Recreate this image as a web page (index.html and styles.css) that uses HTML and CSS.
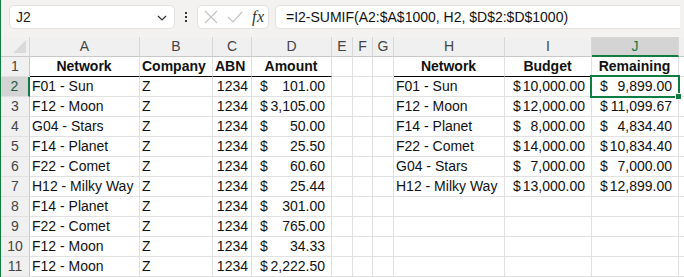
FILE: index.html
```html
<!DOCTYPE html>
<html>
<head>
<meta charset="utf-8">
<link rel="stylesheet" href="styles.css">
</head>
<body>
<div class="app">
  <div class="toolbar">
    <div class="namebox"><span>J2</span>
      <svg class="chev" width="10" height="6" viewBox="0 0 10 6"><path d="M1 1 L5 5 L9 1" fill="none" stroke="#333" stroke-width="1.2"/></svg>
    </div>
    <div class="dots"><i></i><i></i><i></i></div>
    <div class="iconbox">
      <svg width="14" height="14" viewBox="0 0 14 14"><path d="M1 1 L13 13 M13 1 L1 13" stroke="#c4c4c4" stroke-width="1.2" fill="none"/></svg>
      <svg width="16" height="12" viewBox="0 0 16 12"><path d="M1 6 L6 11 L15 1" stroke="#c4c4c4" stroke-width="1.2" fill="none"/></svg>
      <span class="fx"><i>f</i><i>x</i></span>
    </div>
    <div class="formula">=I2-SUMIF(A2:$A$1000, H2, $D$2:$D$1000)</div>
  </div>
  <div class="grid">
    <div class="ch corner"><span class="tri"></span></div>
    <div class="ch">A</div><div class="ch">B</div><div class="ch">C</div><div class="ch">D</div><div class="ch">E</div><div class="ch">F</div><div class="ch">G</div><div class="ch">H</div><div class="ch">I</div><div class="ch sel">J</div><div class="ch last"></div>

    <div class="rh">1</div>
    <div class="c b hd ctr">Network</div><div class="c b hd">Company</div><div class="c b hd">ABN</div><div class="c b hd ctr">Amount</div>
    <div class="c"></div><div class="c"></div><div class="c"></div>
    <div class="c b hd ctr">Network</div><div class="c b hd ctr">Budget</div><div class="c b hd ctr">Remaining</div><div class="c last"></div>

    <div class="rh rsel">2</div>
    <div class="c">F01 - Sun</div><div class="c">Z</div><div class="c r">1234</div><div class="c acc"><span>$</span><span>101.00</span></div>
    <div class="c"></div><div class="c"></div><div class="c"></div>
    <div class="c">F01 - Sun</div><div class="c acc"><span>$</span><span>10,000.00</span></div><div class="c acc active"><span>$</span><span>9,899.00</span><b class="handle"></b></div><div class="c last"></div>

    <div class="rh">3</div>
    <div class="c">F12 - Moon</div><div class="c">Z</div><div class="c r">1234</div><div class="c acc"><span>$</span><span>3,105.00</span></div>
    <div class="c"></div><div class="c"></div><div class="c"></div>
    <div class="c">F12 - Moon</div><div class="c acc"><span>$</span><span>12,000.00</span></div><div class="c acc"><span>$</span><span>11,099.67</span></div><div class="c last"></div>

    <div class="rh">4</div>
    <div class="c">G04 - Stars</div><div class="c">Z</div><div class="c r">1234</div><div class="c acc"><span>$</span><span>50.00</span></div>
    <div class="c"></div><div class="c"></div><div class="c"></div>
    <div class="c">F14 - Planet</div><div class="c acc"><span>$</span><span>8,000.00</span></div><div class="c acc"><span>$</span><span>4,834.40</span></div><div class="c last"></div>

    <div class="rh">5</div>
    <div class="c">F14 - Planet</div><div class="c">Z</div><div class="c r">1234</div><div class="c acc"><span>$</span><span>25.50</span></div>
    <div class="c"></div><div class="c"></div><div class="c"></div>
    <div class="c">F22 - Comet</div><div class="c acc"><span>$</span><span>14,000.00</span></div><div class="c acc"><span>$</span><span>10,834.40</span></div><div class="c last"></div>

    <div class="rh">6</div>
    <div class="c">F22 - Comet</div><div class="c">Z</div><div class="c r">1234</div><div class="c acc"><span>$</span><span>60.60</span></div>
    <div class="c"></div><div class="c"></div><div class="c"></div>
    <div class="c">G04 - Stars</div><div class="c acc"><span>$</span><span>7,000.00</span></div><div class="c acc"><span>$</span><span>7,000.00</span></div><div class="c last"></div>

    <div class="rh">7</div>
    <div class="c">H12 - Milky Way</div><div class="c">Z</div><div class="c r">1234</div><div class="c acc"><span>$</span><span>25.44</span></div>
    <div class="c"></div><div class="c"></div><div class="c"></div>
    <div class="c">H12 - Milky Way</div><div class="c acc"><span>$</span><span>13,000.00</span></div><div class="c acc"><span>$</span><span>12,899.00</span></div><div class="c last"></div>

    <div class="rh">8</div>
    <div class="c">F14 - Planet</div><div class="c">Z</div><div class="c r">1234</div><div class="c acc"><span>$</span><span>301.00</span></div>
    <div class="c"></div><div class="c"></div><div class="c"></div>
    <div class="c"></div><div class="c"></div><div class="c"></div><div class="c last"></div>

    <div class="rh">9</div>
    <div class="c">F22 - Comet</div><div class="c">Z</div><div class="c r">1234</div><div class="c acc"><span>$</span><span>765.00</span></div>
    <div class="c"></div><div class="c"></div><div class="c"></div>
    <div class="c"></div><div class="c"></div><div class="c"></div><div class="c last"></div>

    <div class="rh">10</div>
    <div class="c">F12 - Moon</div><div class="c">Z</div><div class="c r">1234</div><div class="c acc"><span>$</span><span>34.33</span></div>
    <div class="c"></div><div class="c"></div><div class="c"></div>
    <div class="c"></div><div class="c"></div><div class="c"></div><div class="c last"></div>

    <div class="rh">11</div>
    <div class="c">F12 - Moon</div><div class="c">Z</div><div class="c r">1234</div><div class="c acc"><span>$</span><span>2,222.50</span></div>
    <div class="c"></div><div class="c"></div><div class="c"></div>
    <div class="c"></div><div class="c"></div><div class="c"></div><div class="c last"></div>
  </div>
</div>
</body>
</html>
```
FILE: styles.css
```css
html, body {
  margin: 0;
  padding: 0;
  background: #ffffff;
}
body {
  width: 684px;
  height: 277px;
  overflow: hidden;
  font-family: "Liberation Sans", Arial, sans-serif;
  font-size: 14px;
  color: #111;
}
.app {
  border-left: 1px solid #107c41;
  height: 277px;
  overflow: hidden;
}
.toolbar {
  height: 37px;
  box-sizing: border-box;
  background: #f4f2f0;
  display: flex;
  align-items: flex-start;
  padding: 5px 0 0 8px;
  gap: 0;
}
.namebox {
  width: 166px;
  height: 24px;
  box-sizing: border-box;
  background: #fff;
  border: 1px solid #e3e1df;
  border-radius: 5px;
  display: flex;
  align-items: center;
  justify-content: space-between;
  padding: 0 7px 0 6px;
  color: #222;
}
.chev { margin-top: 1px; }
.dots {
  width: 22px;
  height: 24px;
  display: flex;
  flex-direction: column;
  align-items: center;
  justify-content: center;
  gap: 2px;
}
.dots i {
  display: block;
  width: 2px;
  height: 2px;
  background: #333;
}
.iconbox {
  width: 72px;
  height: 24px;
  box-sizing: border-box;
  background: #fff;
  border: 1px solid #e3e1df;
  border-radius: 5px;
  display: flex;
  align-items: center;
  padding: 0 4px 0 6px;
  gap: 9px;
}
.fx {
  font-family: "Liberation Serif", serif;
  font-style: italic;
  font-size: 16px;
  color: #333;
  letter-spacing: -0.5px;
}
.fx i:first-child { margin-right: 1px; }
.formula {
  margin-left: 6px;
  width: 405px;
  height: 24px;
  box-sizing: border-box;
  background: #fff;
  border: 1px solid #e3e1df;
  border-radius: 5px 0 0 5px;
  border-right: none;
  display: flex;
  align-items: center;
  padding-left: 10px;
  color: #111;
}
.grid {
  display: grid;
  grid-template-columns: 29px 110px 73px 39px 80px 21px 20px 21px 111px 87px 87px 1fr;
  grid-auto-rows: 20px;
}
.ch, .rh, .c {
  box-sizing: border-box;
  border-right: 1px solid #e1e1e1;
  border-bottom: 1px solid #e1e1e1;
  white-space: nowrap;
  overflow: visible;
  line-height: 19px;
}
.ch {
  background: #f0f0f0;
  color: #444;
  text-align: center;
  border-right-color: #d8d8d8;
  border-bottom-color: #c8c8c8;
}
.ch.sel {
  background: #d4d4d4;
  color: #107c41;
  border-bottom: 2px solid #107c41;
}
.ch.last { border-right: none; }
.corner { position: relative; }
.tri {
  position: absolute;
  right: 3px;
  bottom: 3px;
  width: 0;
  height: 0;
  border-left: 13px solid transparent;
  border-bottom: 13px solid #dadada;
}
.rh {
  background: #f0f0f0;
  color: #444;
  text-align: center;
  border-right-color: #c8c8c8;
}
.rh.rsel {
  background: #d4d4d4;
  color: #215c3d;
  border-right: 2px solid #107c41;
}
.c {
  padding: 0 3px 0 2px;
  background: #fff;
}
.c.last { border-right: none; }
.c.r { text-align: right; }
.c.b { font-weight: bold; }
.c.ctr { text-align: center; }
.c.hd { border-bottom: 1px solid #000; }
.c.acc {
  display: flex;
  justify-content: space-between;
  padding: 0 6px 0 8px;
}
.c.active {
  position: relative;
}
.c.active::after {
  content: "";
  position: absolute;
  left: -2px;
  top: -2px;
  right: -2px;
  bottom: -2px;
  border: 2px solid #107c41;
  pointer-events: none;
}
.handle {
  position: absolute;
  right: -4px;
  bottom: -4px;
  width: 5px;
  height: 5px;
  background: #107c41;
  border: 1px solid #fff;
  z-index: 2;
}
```
